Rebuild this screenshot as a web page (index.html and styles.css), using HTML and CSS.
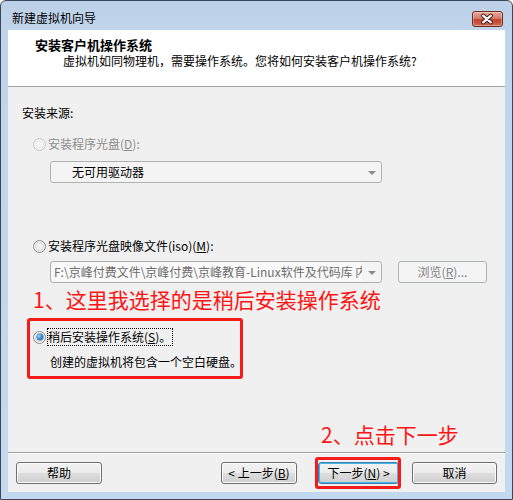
FILE: index.html
```html
<!DOCTYPE html>
<html lang="zh-CN">
<head>
<meta charset="utf-8">
<title>新建虚拟机向导</title>
<link rel="stylesheet" href="styles.css">
</head>
<body>
<div class="window">
  <div class="titlebar">
    <span class="title">新建虚拟机向导</span>
    <span class="close">
      <svg width="31" height="16" viewBox="0 0 31 16">
        <path d="M11.5 4.5 L19.5 11.5 M19.5 4.5 L11.5 11.5" stroke="#4a1c16" stroke-width="4.2" stroke-linecap="round" fill="none"/>
        <path d="M11.5 4.5 L19.5 11.5 M19.5 4.5 L11.5 11.5" stroke="#ffffff" stroke-width="2.2" stroke-linecap="round" fill="none"/>
      </svg>
    </span>
  </div>
  <div class="client">
    <div class="header">
      <div class="h-title">安装客户机操作系统</div>
      <div class="h-sub">虚拟机如同物理机，需要操作系统。您将如何安装客户机操作系统?</div>
    </div>
    <div class="body">
      <div class="label">安装来源:</div>
      <div class="radio-row disabled r1"><span class="radio"></span><span>安装程序光盘(<u>D</u>):</span></div>
      <div class="combo combo1"><span class="combo-text">无可用驱动器</span><span class="arrow"></span></div>
      <div class="radio-row r2"><span class="radio"></span><span>安装程序光盘映像文件(iso)(<u>M</u>):</span></div>
      <div class="iso-row">
        <div class="combo combo2"><span class="combo-text">F:\京峰付费文件\京峰付费\京峰教育-Linux软件及代码库 内</span><span class="arrow"></span></div>
        <div class="btn btn-disabled browse">浏览(<u>R</u>)...</div>
      </div>
      <div class="note note1">1、这里我选择的是稍后安装操作系统</div>
      <div class="later-box">
        <div class="radio-row"><span class="radio checked"></span><span class="focus">稍后安装操作系统(<u>S</u>)。</span></div>
        <div class="later-desc">创建的虚拟机将包含一个空白硬盘。</div>
      </div>
      <div class="note note2">2、点击下一步</div>
    </div>
    <div class="footer">
      <div class="btn help">帮助</div>
      <div class="btn back">&lt; 上一步(<u>B</u>)</div>
      <div class="btn next">下一步(<u>N</u>) &gt;</div>
      <div class="btn cancel">取消</div>
    </div>
  </div>
</div>
</body>
</html>
```
FILE: styles.css
```css
* { box-sizing: border-box; }
body {
  margin: 0;
  font-family: "Noto Sans CJK SC", sans-serif;
  font-size: 12px;
  color: #000;
  background: #fff;
}
u { text-decoration: underline; text-underline-offset: 1px; }

.window {
  width: 513px;
  height: 500px;
  border: 1px solid #3b4756;
  border-radius: 6px 6px 0 0;
  background: linear-gradient(#bcd0e8, #c0d5ec 30px, #c3d9ef);
  display: flex;
  flex-direction: column;
}
.titlebar {
  height: 29px;
  display: flex;
  justify-content: space-between;
  align-items: flex-start;
  flex-shrink: 0;
}
.title {
  margin: 9px 0 0 11px;
  line-height: 16px;
  font-size: 12px;
}
.close {
  margin: 10px 9px 0 0;
  width: 31px;
  height: 16px;
  border: 1px solid #6e2b23;
  border-radius: 3px;
  background: linear-gradient(#e9a899, #d47c6c 45%, #c0412e 55%, #d06a52);
  box-shadow: inset 0 0 0 1px rgba(255,255,255,0.35);
  display: flex;
}
.close svg { display: block; margin: -1px 0 0 -1px; }

.client {
  margin: 0 7px 7px;
  flex: 1;
  display: flex;
  flex-direction: column;
  background: #f0f0f0;
}
.header {
  height: 57px;
  background: #fff;
  border-bottom: 1px solid #a0a0a0;
  padding-top: 7px;
  flex-shrink: 0;
}
.h-title {
  margin-left: 27px;
  font-size: 13px;
  font-weight: bold;
  line-height: 16px;
}
.h-sub {
  margin-left: 55px;
  line-height: 16px;
}

.body {
  flex: 1;
  padding-left: 14px;
  display: flex;
  flex-direction: column;
  align-items: flex-start;
}
.label {
  margin-top: 18px;
  line-height: 16px;
}
.radio-row {
  display: flex;
  align-items: center;
  gap: 2px;
  height: 16px;
  line-height: 16px;
  white-space: nowrap;
}
.r1 { margin: 15px 0 0 11px; }
.r2 { margin: 55px 0 0 11px; }
.radio-row.disabled { color: #8d8d8d; }

.radio {
  width: 13px;
  height: 13px;
  border-radius: 50%;
  border: 1px solid #8e8f8f;
  background: radial-gradient(circle at 50% 50%, #f6f6f6 0, #f0f0f0 2.5px, #d2d2d2 5px, #eaeaea 6px);
  box-shadow: inset 0 0 0 1px #fafafa;
  position: relative;
  flex-shrink: 0;
}
.disabled .radio {
  border-color: #c8c8c8;
  background: radial-gradient(circle at 50% 50%, #f7f7f7 0, #f2f2f2 3px, #e2e2e2 5px, #efefef 6px);
}
.radio.checked::after {
  content: "";
  position: absolute;
  left: 2.5px;
  top: 2.5px;
  width: 6px;
  height: 6px;
  border-radius: 50%;
  background: radial-gradient(circle at 35% 35%, #9fd6f7 0, #3b8fd6 45%, #104e95 100%);
  box-shadow: 0 0 0 0.5px #2a5d93;
}

.combo {
  width: 332px;
  height: 22px;
  border: 1px solid #b0b0b0;
  border-radius: 3px;
  background: #f4f4f4;
  display: flex;
  align-items: center;
}
.combo1 { margin: 9px 0 0 28px; }
.combo-text {
  flex: 1;
  overflow: hidden;
  white-space: nowrap;
  line-height: 18px;
}
.combo1 .combo-text { padding-left: 21px; }
.combo2 .combo-text {
  padding-left: 2px;
  color: #6d6d6d;
  background: #f9f9f9;
  margin: 1px 0 1px 1px;
}
.arrow {
  width: 19px;
  height: 20px;
  flex-shrink: 0;
  display: flex;
  justify-content: center;
  align-items: center;
}
.arrow::before {
  content: "";
  border-left: 4px solid transparent;
  border-right: 4px solid transparent;
  border-top: 4px solid #8c8c8c;
  margin-top: 1px;
}
.iso-row {
  margin: 7px 0 0 28px;
  display: flex;
  align-items: flex-start;
}
.btn {
  height: 22px;
  line-height: 20px;
  text-align: center;
  border: 1px solid #707070;
  border-radius: 3px;
  background: linear-gradient(#f2f2f2 0%, #ebebeb 48%, #dddddd 52%, #cfcfcf 100%);
  box-shadow: inset 0 0 0 1px #fbfbfb;
  white-space: nowrap;
}
.btn-disabled {
  border-color: #adb2b5;
  background: #f4f4f4;
  box-shadow: none;
  color: #838383;
}
.browse {
  width: 89px;
  margin-left: 16px;
}

.note {
  font-size: 21px;
  line-height: 24px;
  color: #ff1414;
  white-space: nowrap;
}
.note1 { margin: 4px 0 0 11px; }
.note2 { margin: 43px 0 0 299px; }

.later-box {
  margin: 7px 0 0 5px;
  width: 216px;
  height: 61px;
  border: 3px solid #f41b1b;
  border-radius: 3px;
  padding: 8px 0 0 3px;
}
.focus {
  outline: 1px dotted #000;
  line-height: 16px;
  padding: 0 1px 0 0;
}
.later-desc {
  margin: 9px 0 0 17px;
  line-height: 16px;
  white-space: nowrap;
}

.footer {
  height: 40px;
  flex-shrink: 0;
  border-top: 1px solid #a0a0a0;
  box-shadow: inset 0 1px 0 #ffffff;
  padding: 9px 8px 0 8px;
  display: flex;
  align-items: flex-start;
}
.help { width: 86px; }
.back { width: 76px; margin-left: auto; }
.next {
  width: 81px;
  margin-left: 21px;
  position: relative;
  border-color: #3c7fb1;
  box-shadow: inset 0 0 0 1px #45b4ea;
}
.next::after {
  content: "";
  position: absolute;
  left: -4px;
  right: -3px;
  top: -6px;
  bottom: -6px;
  border: 3px solid #f41b1b;
  border-radius: 3px;
}
.cancel { width: 85px; margin-left: 13px; }
```
